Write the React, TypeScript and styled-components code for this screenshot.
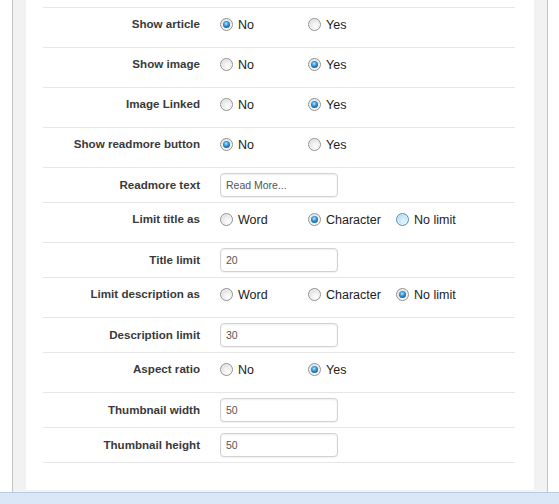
import React from "react";
import styled, { createGlobalStyle, css } from "styled-components";

const GlobalStyle = createGlobalStyle`
  html, body { margin: 0; padding: 0; background: #fff; }
  body { overflow: hidden; font-family: "Liberation Sans", Arial, sans-serif; }
`;

const Page = styled.div`
  width: 559px;
  height: 504px;
  display: flex;
  flex-direction: column;
  overflow: hidden;
`;

const Frame = styled.div`
  flex: 1;
  min-height: 0;
  margin: 0 11px 0 12px;
  border-left: 1px solid #c4c4c4;
  border-right: 1px solid #c4c4c4;
  background: #f2f2f2;
  padding: 0 13px 2px;
  display: flex;
  flex-direction: column;
`;

const Panel = styled.div`
  flex: 1;
  background: #fff;
  padding: 0 19px 0 17px;
`;

const StatusBar = styled.div`
  height: 12px;
  flex: none;
  box-sizing: border-box;
  border-top: 1px solid #b8cbe3;
  background: #dae7f7;
`;

const TopEdge = styled.div`
  height: 8px;
  box-sizing: border-box;
  border-bottom: 1px solid #e6e6e6;
`;

const Row = styled.div<{ $kind: "radio" | "input" }>`
  display: grid;
  grid-template-columns: 157px 1fr;
  column-gap: 20px;
  align-items: center;
  align-content: start;
  box-sizing: border-box;
  border-bottom: 1px solid #e6e6e6;
  ${(p) =>
    p.$kind === "radio"
      ? css`
          height: 40px;
          padding-top: 9px;
          grid-template-rows: 14px;
        `
      : css`
          height: 35px;
          padding-top: 5px;
          grid-template-rows: 24px;
        `}
`;

const Label = styled.div`
  text-align: right;
  font-weight: bold;
  font-size: 11.6px;
  line-height: 14px;
  color: #3a3a3a;
  white-space: nowrap;
`;

const Options = styled.div`
  display: flex;
  align-items: center;
  padding-top: 1px;
`;

const Option = styled.label`
  width: 88px;
  display: flex;
  align-items: center;
  gap: 5px;
  font-size: 12.5px;
  line-height: 14px;
  color: #222;
  white-space: nowrap;
  cursor: pointer;
`;

const RadioMark = styled.span<{ $checked?: boolean; $hover?: boolean }>`
  position: relative;
  flex: none;
  width: 13px;
  height: 13px;
  box-sizing: border-box;
  border-radius: 50%;
  border: 1px solid ${(p) => (p.$hover ? "#4a8dc4" : "#929292")};
  background: ${(p) =>
    p.$hover
      ? "radial-gradient(circle at 60% 65%, #e4f4fd 0%, #bfe3f8 55%, #8cc6ec 100%)"
      : "radial-gradient(circle at 62% 68%, #ffffff 0%, #ececec 45%, #cfcfcf 100%)"};
  box-shadow: inset 0 0 0 1px rgba(255, 255, 255, 0.55);
  ${(p) =>
    p.$checked &&
    css`
      &::after {
        content: "";
        position: absolute;
        left: 2px;
        top: 2px;
        width: 7px;
        height: 7px;
        border-radius: 50%;
        background: radial-gradient(circle at 45% 38%, #b8ecff 0%, #3e9ee0 35%, #135a9c 75%, #0c3f73 100%);
      }
    `}
`;

const TextBox = styled.input`
  width: 118px;
  height: 24px;
  box-sizing: border-box;
  margin: 0;
  padding: 0 5px;
  border: 1px solid #d2d2d2;
  border-radius: 4px;
  background: #fff;
  box-shadow: inset 0 1px 2px rgba(0, 0, 0, 0.07), 0 1px 1px rgba(0, 0, 0, 0.06);
  font-family: "Liberation Sans", Arial, sans-serif;
  font-size: 10.5px;
  color: #555;
  outline: none;
`;

type RadioField = {
  kind: "radio";
  label: string;
  options: string[];
  checked: number;
  hover?: number;
};
type InputField = { kind: "input"; label: string; value: string };
type Field = RadioField | InputField;

const fields: Field[] = [
  { kind: "radio", label: "Show article", options: ["No", "Yes"], checked: 0 },
  { kind: "radio", label: "Show image", options: ["No", "Yes"], checked: 1 },
  { kind: "radio", label: "Image Linked", options: ["No", "Yes"], checked: 1 },
  { kind: "radio", label: "Show readmore button", options: ["No", "Yes"], checked: 0 },
  { kind: "input", label: "Readmore text", value: "Read More..." },
  {
    kind: "radio",
    label: "Limit title as",
    options: ["Word", "Character", "No limit"],
    checked: 1,
    hover: 2,
  },
  { kind: "input", label: "Title limit", value: "20" },
  {
    kind: "radio",
    label: "Limit description as",
    options: ["Word", "Character", "No limit"],
    checked: 2,
  },
  { kind: "input", label: "Description limit", value: "30" },
  { kind: "radio", label: "Aspect ratio", options: ["No", "Yes"], checked: 1 },
  { kind: "input", label: "Thumbnail width", value: "50" },
  { kind: "input", label: "Thumbnail height", value: "50" },
];

export default function App() {
  return (
    <>
      <GlobalStyle />
      <Page>
        <Frame>
          <Panel>
            <TopEdge />
            {fields.map((f) => (
              <Row key={f.label} $kind={f.kind}>
                <Label>{f.label}</Label>
                {f.kind === "radio" ? (
                  <Options>
                    {f.options.map((o, i) => (
                      <Option key={o}>
                        <RadioMark $checked={i === f.checked} $hover={i === f.hover} />
                        {o}
                      </Option>
                    ))}
                  </Options>
                ) : (
                  <div>
                    <TextBox defaultValue={f.value} />
                  </div>
                )}
              </Row>
            ))}
          </Panel>
        </Frame>
        <StatusBar />
      </Page>
    </>
  );
}
